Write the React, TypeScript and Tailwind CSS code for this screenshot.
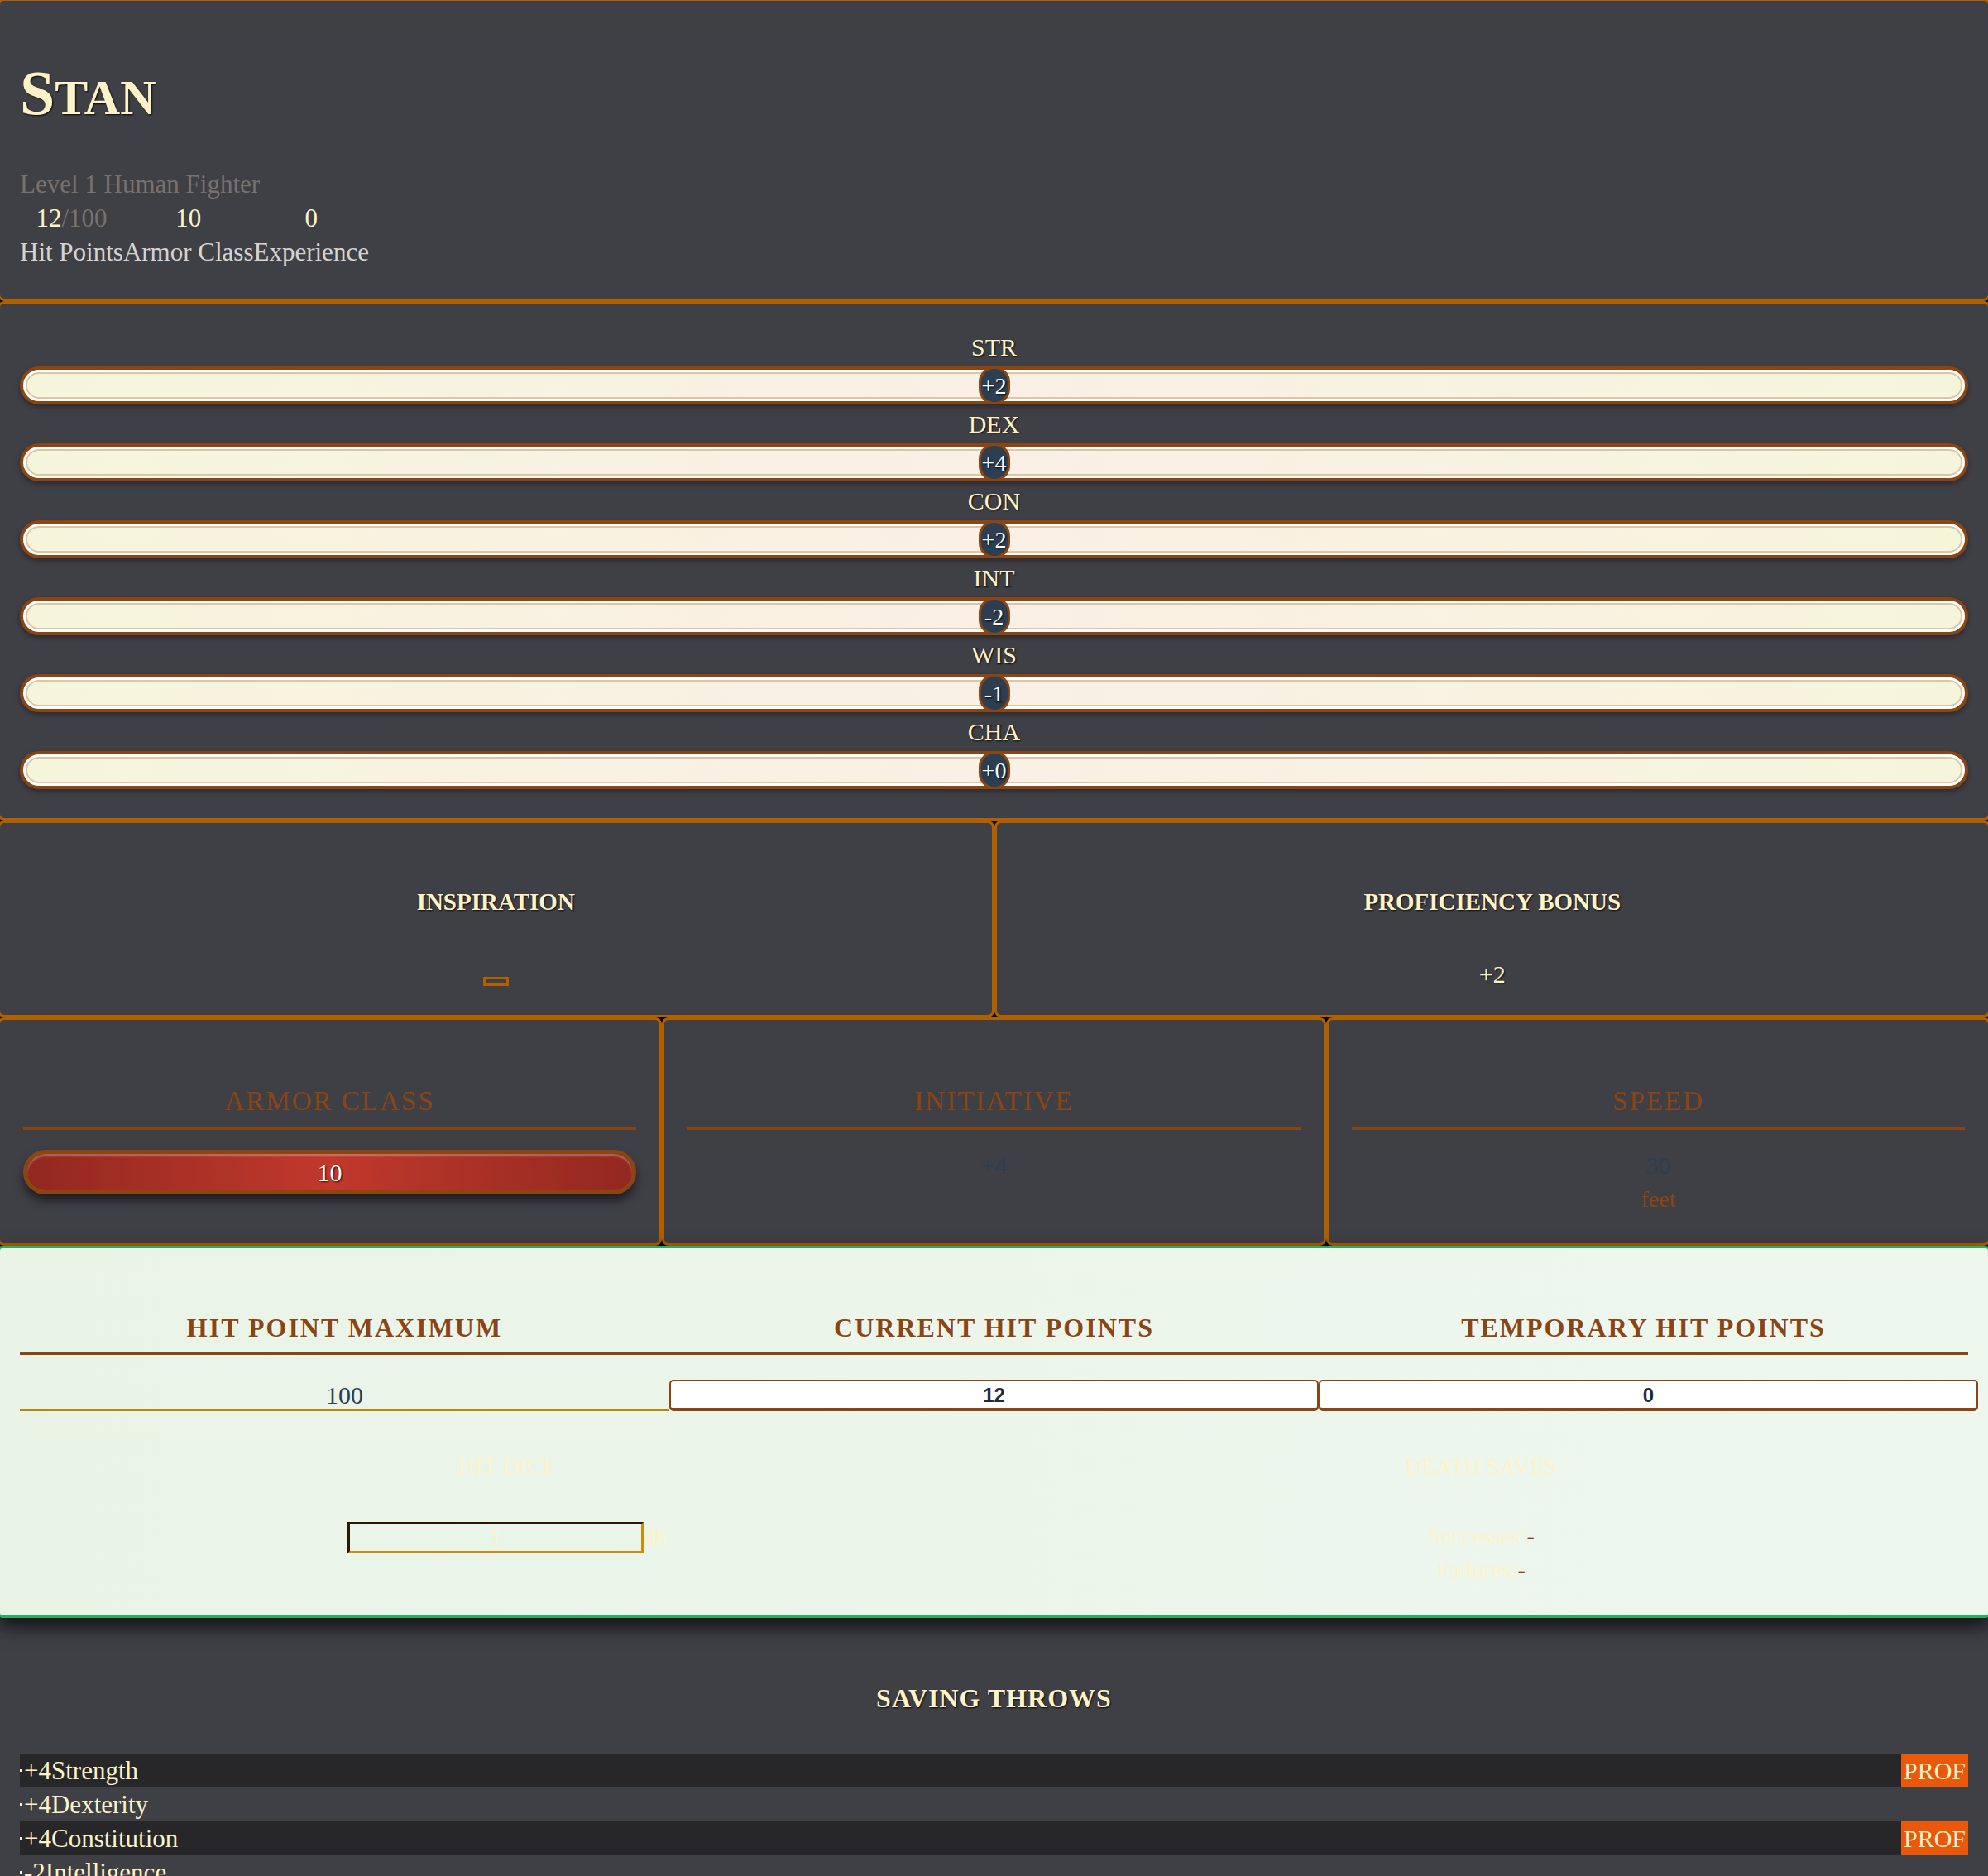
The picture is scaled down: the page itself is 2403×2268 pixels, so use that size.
const abilities = [
  { key: 'STR', mod: '+2' },
  { key: 'DEX', mod: '+4' },
  { key: 'CON', mod: '+2' },
  { key: 'INT', mod: '-2' },
  { key: 'WIS', mod: '-1' },
  { key: 'CHA', mod: '+0' },
]

const saves = [
  { name: 'Strength', mod: '+4', prof: true },
  { name: 'Dexterity', mod: '+4', prof: false },
  { name: 'Constitution', mod: '+4', prof: true },
  { name: 'Intelligence', mod: '-2', prof: false },
  { name: 'Wisdom', mod: '-1', prof: false },
  { name: 'Charisma', mod: '+0', prof: false },
]

const card = 'rounded-lg border-[3px] border-[#b06000] bg-[#3f3f46]'
const glow = '[text-shadow:1px_1px_2px_rgba(0,0,0,0.85)]'

function Stat({ value, label }: { value: React.ReactNode; label: string }) {
  return (
    <div className="flex flex-col items-center">
      <span className="text-[#fef3c7]">{value}</span>
      <span className="text-[#d6d3d1]">{label}</span>
    </div>
  )
}

function AbilityBar({ label, mod }: { label: string; mod: string }) {
  return (
    <div>
      <div className={`text-center text-[#fef3c7] ${glow}`}>{label}</div>
      <div className="relative my-[3px] h-[46px] rounded-full border-[4px] border-[#8b4513] bg-white p-[3px] shadow-[0_3px_6px_rgba(0,0,0,0.35)]">
        <div className="h-full rounded-full border-[2px] border-[#dcc6a4] bg-linear-to-r from-[#f5f5dc] via-[#faf0e6] to-[#f5f5dc]" />
        <div className="absolute left-1/2 top-[-4px] flex h-[46px] w-[38px] -translate-x-1/2 items-center justify-center rounded-full border-[3px] border-[#8b4513] bg-[#2c3e50] text-[28px] text-white [text-shadow:1px_1px_2px_rgba(0,0,0,0.9)]">
          {mod}
        </div>
      </div>
    </div>
  )
}

function CombatCard({ title, children }: { title: string; children: React.ReactNode }) {
  return (
    <div className={`${card} h-[276px] px-[28px] pt-[78px]`}>
      <div className="border-b-[3px] border-[#8b4513] pb-[11px] text-center text-[33px] tracking-[2px] text-[#8b4513]">
        {title}
      </div>
      {children}
    </div>
  )
}

export default function App() {
  return (
    <div className="min-h-screen overflow-hidden bg-black font-['Liberation_Serif',serif] text-[30px] leading-[41px]">
      <div className="-mx-[3px]">
        {/* header */}
        <header className={`${card} -mt-[2px] px-[24px] pt-[73px] pb-[36px] text-[31px]`}>
          <h1 className={`mb-[46px] flex items-baseline font-bold leading-[76px] text-[#fef3c7] ${glow}`}>
            <span className="text-[76px]">S</span>
            <span className="text-[60px]">TAN</span>
          </h1>
          <div className="text-[#78716c]">Level 1 Human Fighter</div>
          <div className="flex">
            <Stat
              value={
                <>
                  12<span className="text-[#78716c]">/100</span>
                </>
              }
              label="Hit Points"
            />
            <Stat value="10" label="Armor Class" />
            <Stat value="0" label="Experience" />
          </div>
        </header>

        {/* abilities */}
        <section className={`${card} px-[24px] pt-[32px] pb-[32px]`}>
          {abilities.map((a) => (
            <AbilityBar key={a.key} label={a.key} mod={a.mod} />
          ))}
        </section>

        {/* inspiration / proficiency */}
        <div className="grid grid-cols-2">
          <div className={`${card} h-[238px] pt-[75px] text-center`}>
            <div className={`text-[29px] font-bold text-[#fef3c7] ${glow}`}>INSPIRATION</div>
            <div className="mt-[46px] flex h-[41px] items-end justify-center pb-[6px]">
              <div className="h-[11px] w-[31px] border-[3px] border-[#b06000]" />
            </div>
          </div>
          <div className={`${card} h-[238px] pt-[75px] text-center`}>
            <div className={`text-[29px] font-bold text-[#fef3c7] ${glow}`}>PROFICIENCY BONUS</div>
            <div className={`mt-[46px] text-[#fef3c7] ${glow}`}>+2</div>
          </div>
        </div>

        {/* combat */}
        <div className="grid grid-cols-3">
          <CombatCard title="ARMOR CLASS">
            <div className="mt-[24px] flex h-[54px] items-center justify-center rounded-full border-[5px] border-[#8b4513] bg-linear-to-r from-[#922820] via-[#c0392b] to-[#922820] text-white shadow-[0_8px_12px_rgba(0,0,0,0.5),inset_0_3px_2px_rgba(255,255,255,0.25)] [text-shadow:1px_1px_2px_rgba(0,0,0,0.8)]">
              10
            </div>
          </CombatCard>
          <CombatCard title="INITIATIVE">
            <div className="mt-[22px] text-center text-[#2c3e50]">+4</div>
          </CombatCard>
          <CombatCard title="SPEED">
            <div className="mt-[22px] text-center text-[#2c3e50]">30</div>
            <div className="text-center text-[28px] text-[#8b4513]">feet</div>
          </CombatCard>
        </div>

        {/* hit points */}
        <section className="relative z-10 rounded-md border-[3px] border-[#27ae60] bg-linear-to-r from-[#e9f4e7] to-[#eef7ee] px-[24px] pt-[76px] pb-[35px] shadow-[0_10px_24px_rgba(0,0,0,0.75)]">
          <div className="grid grid-cols-3">
            {['HIT POINT MAXIMUM', 'CURRENT HIT POINTS', 'TEMPORARY HIT POINTS'].map((h) => (
              <div
                key={h}
                className="border-b-[3px] border-[#8b4513] pb-[9px] text-center text-[32px] font-bold tracking-[2px] text-[#8b4513] [text-shadow:1px_1px_1px_rgba(255,255,255,0.9)]"
              >
                {h}
              </div>
            ))}
          </div>
          <div className="mt-[30px] grid grid-cols-3">
            <div className="flex h-[38px] items-center justify-center border-b-[2px] border-[#b8860b] text-[#2c3e50]">
              100
            </div>
            <div className="flex h-[38px] items-center justify-center rounded-[5px] border-[2px] border-b-[4px] border-[#8b4513] bg-white font-['Liberation_Sans',sans-serif] text-[24px] font-bold text-[#1e293b]">
              12
            </div>
            <div className="-mr-[12px] flex h-[38px] items-center justify-center rounded-[5px] border-[2px] border-b-[4px] border-[#8b4513] bg-white font-['Liberation_Sans',sans-serif] text-[24px] font-bold text-[#1e293b]">
              0
            </div>
          </div>
          <div className="mt-[46px] grid grid-cols-2 text-[#fef3c7]">
            <div className="flex flex-col items-center">
              <div className="text-[28px]">HIT DICE</div>
              <div className="mt-[45px] flex items-center">
                <div className="flex h-[38px] w-[358px] items-center justify-center border-[3px] border-t-[#2a1800] border-l-[#2a1800] border-r-[#c8900a] border-b-[#c8900a] text-[28px]">
                  1
                </div>
                <span className="text-[28px]">d8</span>
              </div>
            </div>
            <div className="flex flex-col items-center">
              <div className="text-[28px]">DEATH SAVES</div>
              <div className="mt-[43px] text-[28px]">
                Successes:<span className="font-bold text-[#8b4513]">-</span>
              </div>
              <div className="text-[28px]">
                Failures:<span className="font-bold text-[#8b4513]">-</span>
              </div>
            </div>
          </div>
        </section>

        {/* saving throws */}
        <section className="bg-[#3f3f46] px-[27px] pt-[77px] pb-[40px]">
          <div className={`text-center text-[32px] font-bold tracking-[1px] text-[#fef3c7] ${glow}`}>
            SAVING THROWS
          </div>
          <div className="mt-[46px] text-[31px]">
            {saves.map((s, i) => (
              <div
                key={s.name}
                className={`flex h-[41px] items-center justify-between text-[#fef3c7] ${i % 2 === 0 ? 'bg-[#27272a]' : ''}`}
              >
                <span className="flex items-center">
                  <span className="mr-[2px] inline-block h-[3px] w-[3px] bg-[#fef3c7]" />
                  {s.mod}
                  {s.name}
                </span>
                {s.prof && (
                  <span className="flex h-full items-center bg-[#ea580c] px-[3px] text-[30px] text-[#fef3c7]">PROF</span>
                )}
              </div>
            ))}
          </div>
        </section>
      </div>
    </div>
  )
}
